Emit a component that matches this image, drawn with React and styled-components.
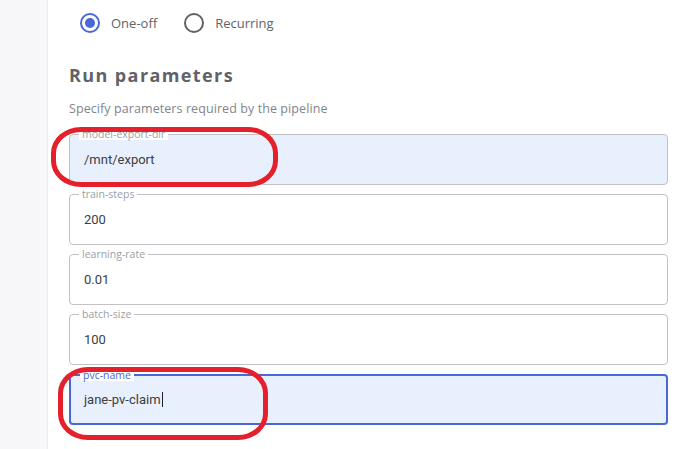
import React from "react";
import styled, { createGlobalStyle } from "styled-components";

const GlobalStyle = createGlobalStyle`
  html, body {
    margin: 0;
    padding: 0;
    background: #ffffff;
    font-family: "Open Sans", Roboto, Arial, sans-serif;
  }
`;

const Page = styled.div`
  display: flex;
  width: 696px;
  height: 449px;
  overflow: hidden;
`;

const Sidebar = styled.div`
  width: 47px;
  flex-shrink: 0;
  background: #f7f7f9;
  border-right: 1px solid #ececee;
`;

const Main = styled.div`
  flex: 1;
  padding: 0 28px 0 21px;
`;

const RadioRow = styled.div`
  display: flex;
  align-items: center;
  height: 46px;
  padding-left: 11px;
  gap: 27px;
`;

const RadioOption = styled.label`
  display: flex;
  align-items: center;
  gap: 11px;
  font-size: 13px;
  color: #5f6368;
`;

const RadioCircle = styled.span`
  width: 16px;
  height: 16px;
  border-radius: 50%;
  border: 2px solid ${(p) => (p.$checked ? "#4a67d6" : "#5f6368")};
  display: flex;
  align-items: center;
  justify-content: center;

  &::after {
    content: "";
    width: 10px;
    height: 10px;
    border-radius: 50%;
    background: ${(p) => (p.$checked ? "#4a67d6" : "transparent")};
  }
`;

const Heading = styled.h2`
  margin: 9px 0 0;
  font-size: 18px;
  font-weight: 700;
  letter-spacing: 1.4px;
  color: #5f6368;
  line-height: 40px;
`;

const Description = styled.p`
  margin: 5px 0 16px;
  font-size: 12.5px;
  letter-spacing: 0.08px;
  color: #80868b;
  line-height: 18px;
`;

const Fields = styled.div`
  display: flex;
  flex-direction: column;
  gap: 9px;
`;

const Field = styled.div`
  position: relative;
  height: 51px;
  box-sizing: border-box;
  border: ${(p) => (p.$focused ? "2px solid #4a67d6" : "1px solid #c2c2c4")};
  border-radius: 4px;
  background: ${(p) => (p.$filled ? "#e8effd" : "#ffffff")};
  display: flex;
  align-items: center;
  padding-left: ${(p) => (p.$focused ? "13px" : "14px")};
`;

const FieldLabel = styled.span`
  position: absolute;
  top: -7px;
  left: 9px;
  padding: 0 3px;
  font-size: 10.5px;
  line-height: 12px;
  color: ${(p) => (p.$focused ? "#4a67d6" : "#9aa0a6")};
  background: #ffffff;
`;

const FieldValue = styled.span`
  font-family: Roboto, Arial, sans-serif;
  font-size: 13px;
  color: #3c4043;
  display: flex;
  align-items: center;
`;

const Caret = styled.span`
  display: inline-block;
  width: 1px;
  height: 15px;
  background: #202124;
  margin-left: 1px;
`;

const Annotation = styled.div`
  position: absolute;
  left: ${(p) => p.$left}px;
  top: ${(p) => p.$top}px;
  width: ${(p) => p.$width}px;
  height: ${(p) => p.$height}px;
  box-sizing: border-box;
  border: 5px solid #e3202b;
  border-radius: 30px / 26px;
  pointer-events: none;
`;

const fields = [
  { name: "model-export-dir", value: "/mnt/export", filled: true, mark: { left: -19, top: -8, width: 227, height: 60 } },
  { name: "train-steps", value: "200" },
  { name: "learning-rate", value: "0.01" },
  { name: "batch-size", value: "100" },
  { name: "pvc-name", value: "jane-pv-claim", filled: true, focused: true, caret: true, mark: { left: -13, top: -9, width: 210, height: 73 } },
];

export default function App() {
  return (
    <>
      <GlobalStyle />
      <Page>
        <Sidebar />
        <Main>
          <RadioRow>
            <RadioOption>
              <RadioCircle $checked />
              One-off
            </RadioOption>
            <RadioOption>
              <RadioCircle />
              Recurring
            </RadioOption>
          </RadioRow>
          <Heading>Run parameters</Heading>
          <Description>Specify parameters required by the pipeline</Description>
          <Fields>
            {fields.map((f) => (
              <Field key={f.name} $filled={f.filled} $focused={f.focused}>
                <FieldLabel $focused={f.focused}>{f.name}</FieldLabel>
                <FieldValue>
                  {f.value}
                  {f.caret && <Caret />}
                </FieldValue>
                {f.mark && (
                  <Annotation
                    $left={f.mark.left}
                    $top={f.mark.top}
                    $width={f.mark.width}
                    $height={f.mark.height}
                  />
                )}
              </Field>
            ))}
          </Fields>
        </Main>
      </Page>
    </>
  );
}
